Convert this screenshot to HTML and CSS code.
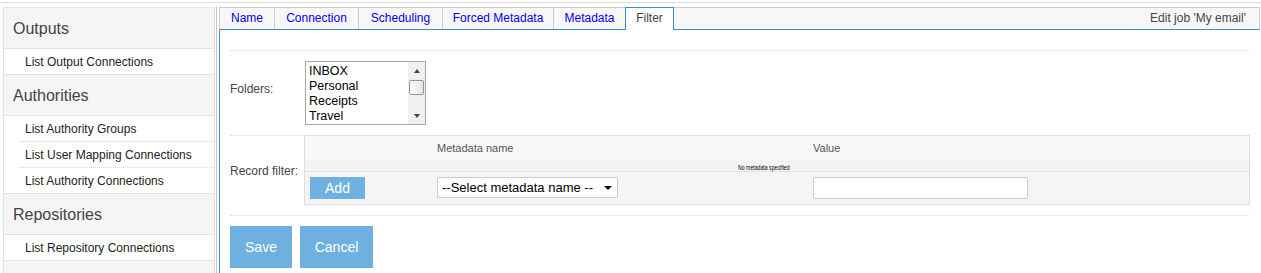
FILE: index.html
```html
<!DOCTYPE html>
<html>
<head>
<meta charset="utf-8">
<title>Edit job</title>
<link rel="stylesheet" href="styles.css">
</head>
<body>
<div class="topline"></div>
<div class="layout">
  <nav class="sidebar">
    <div class="sb-head">Outputs</div>
    <a class="sb-item last">List Output Connections</a>
    <div class="sb-head">Authorities</div>
    <a class="sb-item">List Authority Groups</a>
    <a class="sb-item">List User Mapping Connections</a>
    <a class="sb-item last">List Authority Connections</a>
    <div class="sb-head">Repositories</div>
    <a class="sb-item last">List Repository Connections</a>
    <div class="sb-head fill"></div>
  </nav>
  <div class="vrule"></div>
  <main class="main">
    <div class="tabbar">
      <a class="tab">Name</a>
      <a class="tab">Connection</a>
      <a class="tab">Scheduling</a>
      <a class="tab">Forced Metadata</a>
      <a class="tab">Metadata</a>
      <a class="tab active">Filter</a>
      <span class="title">Edit job 'My email'</span>
    </div>
    <div class="content">
      <div class="sep-top"></div>
      <div class="frow folders">
        <div class="flabel raised">Folders:</div>
        <div class="listbox">
          <div class="lb-items">
            <div class="lb-item">INBOX</div>
            <div class="lb-item">Personal</div>
            <div class="lb-item">Receipts</div>
            <div class="lb-item">Travel</div>
          </div>
          <div class="lb-scroll">
            <div class="lb-btn"><span class="arr-up"></span></div>
            <div class="lb-thumb"></div>
            <div class="lb-space"></div>
            <div class="lb-btn"><span class="arr-down"></span></div>
          </div>
        </div>
      </div>
      <div class="frow record">
        <div class="flabel">Record filter:</div>
        <div class="mtable">
          <div class="mt-head">
            <div></div>
            <div>Metadata name</div>
            <div>Value</div>
          </div>
          <div class="mt-empty"><span>No metadata specified</span></div>
          <div class="mt-row">
            <div><button class="btn add">Add</button></div>
            <div><div class="fake-select">--Select metadata name --<span class="sel-arrow"></span></div></div>
            <div><input class="txt" type="text"></div>
          </div>
        </div>
      </div>
      <div class="actions">
        <button class="btn big save">Save</button>
        <button class="btn big cancel">Cancel</button>
      </div>
    </div>
  </main>
</div>
</body>
</html>
```

FILE: styles.css
```css
* { box-sizing: border-box; }
html, body { height: 100%; }
body {
  margin: 0;
  font-family: "Liberation Sans", Arial, sans-serif;
  background: #fff;
  overflow: hidden;
}
.topline {
  height: 3px;
  border-bottom: 1px solid #dcdcdc;
}
.layout {
  display: flex;
  padding-top: 4px;
  height: calc(100% - 3px);
}
.sidebar {
  width: 212px;
  margin-left: 3px;
  border: 1px solid #e3e3e3;
  border-bottom: 0;
  display: flex;
  flex-direction: column;
  flex-shrink: 0;
}
.sb-head {
  height: 41px;
  line-height: 42px;
  padding-left: 9px;
  font-size: 16px;
  color: #444;
  background: #f5f5f5;
  border-bottom: 1px solid #e3e3e3;
}
.sb-head.fill { flex: 1; border-bottom: 0; }
.sb-item {
  display: block;
  height: 26px;
  line-height: 26px;
  margin-left: 16px;
  padding-left: 5px;
  font-size: 12px;
  color: #222;
  border-bottom: 1px dotted #d8d8d8;
}
.sb-item.last {
  margin-left: 0;
  padding-left: 21px;
  border-bottom: 1px solid #e3e3e3;
}
.vrule {
  width: 1px;
  margin-left: 1px;
  background: #c4c4c4;
  flex-shrink: 0;
}
.main {
  flex: 1;
  margin-left: 2px;
  margin-right: 1px;
  display: flex;
  flex-direction: column;
}
.tabbar {
  display: flex;
  height: 23px;
  border: 1px solid #cccccc;
  border-bottom: 1px solid #3a8dd2;
  background: #f7f7f7;
}
.tab {
  height: 21px;
  line-height: 21px;
  text-align: center;
  font-size: 12px;
  color: #0000ee;
  border-right: 1px solid #cccccc;
  flex-shrink: 0;
}
.tab:nth-child(1) { width: 55px; }
.tab:nth-child(2) { width: 84px; }
.tab:nth-child(3) { width: 84px; }
.tab:nth-child(4) { width: 111px; }
.tab:nth-child(5) { width: 72px; }
.tab.active {
  width: 49px;
  height: 23px;
  margin: -1px 0 -1px -1px;
  background: #fff;
  color: #444;
  border: 1px solid #3a8dd2;
  border-bottom: 0;
}
.title {
  margin-left: auto;
  padding-right: 13px;
  line-height: 21px;
  font-size: 12px;
  color: #444;
}
.content {
  flex: 1;
  border-left: 1px solid #3a8dd2;
  padding: 0 10px;
}
.sep-top {
  height: 21px;
  border-bottom: 1px dotted #dddddd;
}
.frow {
  display: flex;
  align-items: center;
  border-bottom: 1px dotted #dddddd;
}
.folders { padding: 10px 0; }
.record { padding: 0 0 10px; }
.flabel {
  width: 74px;
  flex-shrink: 0;
  font-size: 12px;
  color: #444;
}
.flabel.raised { margin-bottom: 8px; }
.listbox {
  margin-left: 1px;
  width: 121px;
  height: 64px;
  border: 1px solid #a8a8a8;
  display: flex;
  background: #fff;
}
.lb-items {
  flex: 1;
  padding: 2px 0 0 3px;
}
.lb-item {
  height: 15px;
  line-height: 15px;
  font-size: 12.5px;
  color: #000;
}
.lb-scroll {
  width: 17px;
  background: #f0f0f0;
  display: flex;
  flex-direction: column;
  align-items: center;
}
.lb-btn {
  height: 17px;
  width: 17px;
  display: flex;
  align-items: center;
  justify-content: center;
}
.arr-up, .arr-down {
  width: 0;
  height: 0;
  border-left: 3.5px solid transparent;
  border-right: 3.5px solid transparent;
}
.arr-up { border-bottom: 4px solid #444; }
.arr-down { border-top: 4px solid #444; }
.lb-thumb {
  margin-top: 1px;
  width: 15px;
  height: 15px;
  border: 1px solid #969696;
  border-radius: 2px;
  background: linear-gradient(to right, #fdfdfd, #e4e4e4);
}
.lb-space { flex: 1; }
.mtable {
  flex: 1;
  margin-top: -1px;
  border: 1px solid #dddddd;
  background: #f5f5f5;
}
.mt-head, .mt-row {
  display: grid;
  grid-template-columns: 132px 376px 1fr;
}
.mt-head {
  height: 23px;
  line-height: 24px;
  font-size: 11px;
  color: #555;
  background: #f8f8f8;
}
.mt-empty {
  height: 13px;
  line-height: 12px;
  padding-left: 433px;
  background: #f4f4f4;
  border-bottom: 1px solid #e3e3e3;
}
.mt-empty span {
  display: inline-block;
  font-size: 7px;
  color: #000;
  transform: scaleX(0.74);
  transform-origin: left center;
}
.mt-row {
  height: 32px;
  padding-top: 5px;
}
.btn {
  border: 0;
  margin: 0;
  padding: 0;
  background: #6eb1e1;
  color: #fff;
  font-family: "Liberation Sans", Arial, sans-serif;
  font-size: 14px;
  text-align: center;
}
.add {
  margin-left: 5px;
  width: 55px;
  height: 22px;
  line-height: 22px;
  display: block;
}
.fake-select {
  position: relative;
  width: 181px;
  height: 21px;
  line-height: 19px;
  padding-left: 4px;
  border: 1px solid #cccccc;
  border-radius: 2px;
  background: #fff;
  font-size: 13px;
  color: #000;
}
.sel-arrow {
  position: absolute;
  right: 5px;
  top: 8px;
  width: 0;
  height: 0;
  border-left: 4px solid transparent;
  border-right: 4px solid transparent;
  border-top: 4px solid #000;
}
.txt {
  display: block;
  width: 215px;
  height: 22px;
  margin: 0;
  border: 1px solid #cccccc;
  border-radius: 2px;
  background: #fff;
  padding: 0 4px;
}
.actions {
  display: flex;
  gap: 8px;
  padding-top: 10px;
}
.big {
  height: 42px;
  line-height: 42px;
}
.save { width: 62px; }
.cancel { width: 73px; }
```
